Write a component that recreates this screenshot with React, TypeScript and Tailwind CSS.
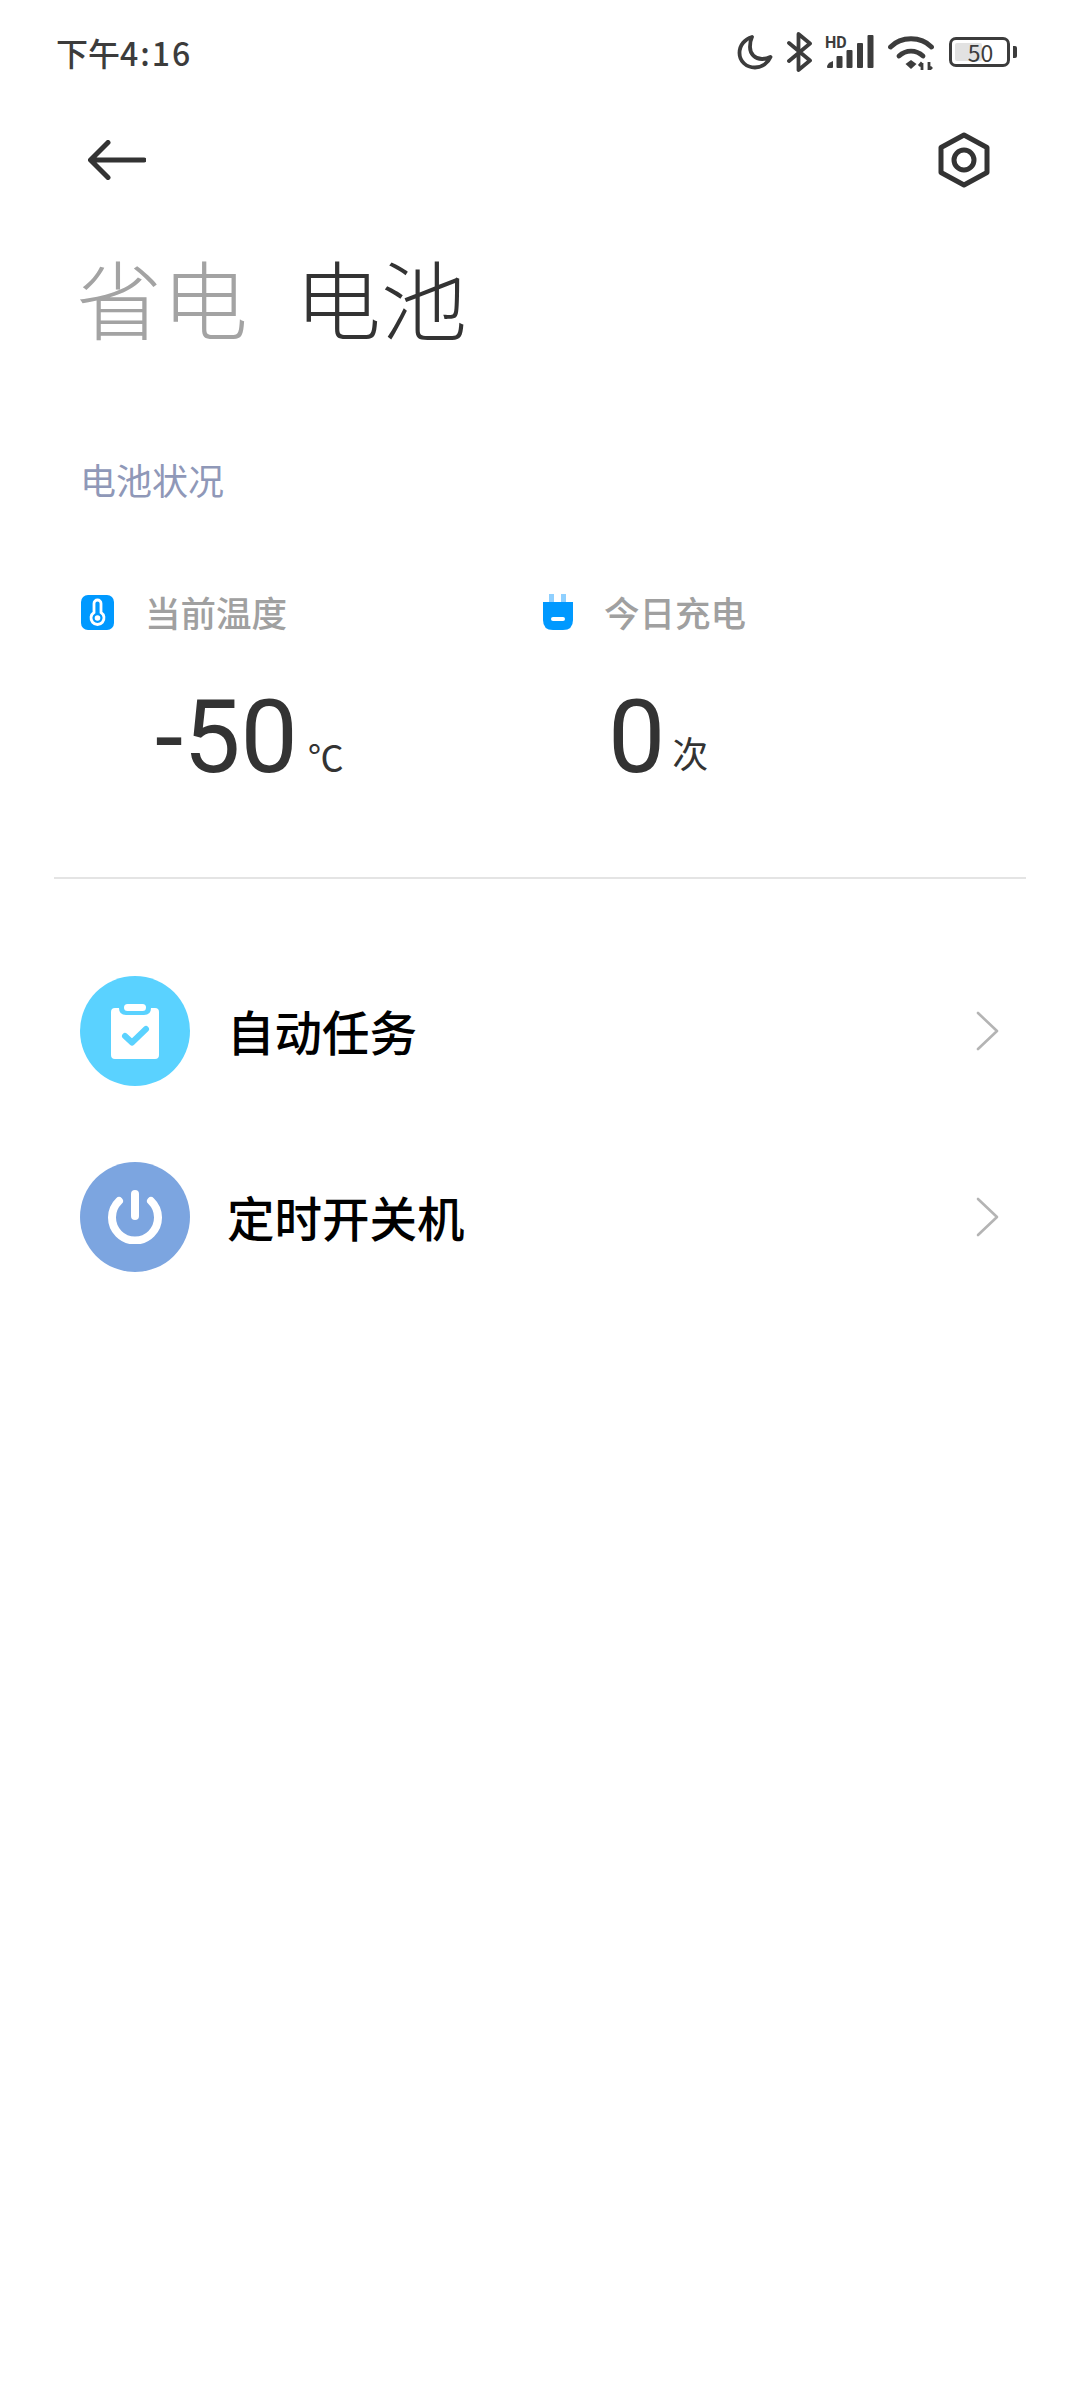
const cjk = "font-['Noto_Sans_CJK_SC','Noto_Sans',sans-serif]";
const num = "font-['Roboto','Noto_Sans_CJK_SC',sans-serif]";

const StatusIcons = () => (
  <div className="flex items-center">
    {/* moon */}
    <svg width="36" height="36" viewBox="0 0 36 36" fill="none" stroke="#3c3c3c" strokeWidth="3.800" strokeLinejoin="round" strokeLinecap="round">
      <path d="M15 3 C8 5 2.500 11 2.500 19 C2.500 27 9 33.500 18 33.500 C25 33.500 31 29 33.500 23 C31 24.500 28 25 25 25 C18 25 13 20 13 13 C13 9 13.500 6 15 3 Z" />
    </svg>
    {/* bluetooth */}
    <svg className="ml-[14px]" width="26" height="40" viewBox="0 0 26 40" fill="none" stroke="#3c3c3c" strokeWidth="3.800" strokeLinejoin="round" strokeLinecap="round">
      <path d="M2 11 L23 28.500 L11.500 38 L11.500 2 L23 11.500 L2 29" />
    </svg>
    {/* HD signal */}
    <svg className="ml-[12px] overflow-visible" width="50" height="36" viewBox="0 0 50 36">
      <text x="0" y="13.500" fontFamily="Roboto, sans-serif" fontWeight="700" fontSize="16" fill="#3c3c3c">HD</text>
      <path d="M2 33 Q2 29 8 27 L8 33 Q8 34 7 34 L3 34 Q2 34 2 33Z" fill="#3c3c3c" />
      <rect x="11.500" y="22" width="6" height="12" rx="1" fill="#3c3c3c" />
      <rect x="21.500" y="16" width="6" height="18" rx="1" fill="#3c3c3c" />
      <rect x="32" y="9" width="6" height="25" rx="1" fill="#3c3c3c" />
      <rect x="42.500" y="1" width="6" height="33" rx="1" fill="#3c3c3c" />
    </svg>
    {/* wifi */}
    <svg className="ml-[13px]" width="46" height="36" viewBox="0 0 46 36" fill="none">
      <path d="M2.500 13 C13 2 33 2 43.500 13" stroke="#3c3c3c" strokeWidth="4.800" strokeLinecap="round" />
      <path d="M11 22 C18 15.500 28 15.500 35 22" stroke="#3c3c3c" strokeWidth="4.800" strokeLinecap="round" />
      <path d="M17.500 30 L23 26 L28.500 30 L23 35 Z" fill="#3c3c3c" />
      <path d="M34 36 V29 M31 32 L34 28.500 M41 36 V28 M41 36 L44 33" stroke="#3c3c3c" strokeWidth="2.800" />
    </svg>
    {/* battery */}
    <div className="ml-[15px] flex items-center">
      <div className="relative w-[61px] h-[30px] rounded-[7px] border-[3px] border-[#3c3c3c]">
        <div className="absolute left-[3px] top-[3px] bottom-[3px] w-[27px] rounded-[2px] bg-[#e2e2e2]" />
        <span className={`absolute inset-0 pl-[2px] flex items-center justify-center text-[23px] leading-none text-[#3c3c3c] ${cjk}`}>50</span>
      </div>
      <div className="ml-[3px] w-[4px] h-[12px] rounded-r-[2px] bg-[#3c3c3c]" />
    </div>
  </div>
);

const StatBlock = ({
  icon,
  label,
  value,
  unit,
  valueClass,
  unitClass,
}: {
  icon: React.ReactNode;
  label: string;
  value: string;
  unit: string;
  valueClass: string;
  unitClass: string;
}) => (
  <div className="flex-1">
    <div className="flex items-center h-[36px] gap-[31px]">
      {icon}
      <span className={`text-[35.500px] leading-none font-medium text-[#a0a0a0] ${cjk}`}>{label}</span>
    </div>
    <div className={`mt-[62px] flex items-baseline ${valueClass}`}>
      <span className={`text-[102px] leading-[90px] text-[#333333] ${num}`}>{value}</span>
      <span className={`text-[36px] leading-none text-[#333333] ${cjk} ${unitClass}`}>{unit}</span>
    </div>
  </div>
);

const Row = ({ bg, icon, label }: { bg: string; icon: React.ReactNode; label: string }) => (
  <div className="flex items-center h-[110px] pl-[80px] pr-[80px]">
    <div className={`flex items-center justify-center w-[110px] h-[110px] rounded-full ${bg}`}>{icon}</div>
    <span className={`ml-[37px] flex-1 text-[47.500px] leading-none font-medium text-black ${cjk}`}>{label}</span>
    <svg width="24" height="40" viewBox="0 0 24 40" fill="none" stroke="#b4b4b4" strokeWidth="2.600" strokeLinecap="round" strokeLinejoin="round">
      <path d="M2 2 L21 20 L2 38" />
    </svg>
  </div>
);

export default function App() {
  return (
    <div className={`w-[1080px] min-h-[2400px] bg-white ${cjk}`}>
      {/* status bar */}
      <div className="flex items-center justify-between h-[104px] pl-[56px] pr-[63px]">
        <span className="text-[32px] leading-none font-medium text-[#3c3c3c]">
          下午<span className="tracking-[2px]">4:16</span>
        </span>
        <StatusIcons />
      </div>

      {/* top actions */}
      <div className="flex items-center justify-between h-[112px] pl-[88px] pr-[90px]">
        <svg width="58" height="40" viewBox="0 0 58 40" fill="none" stroke="#333333" strokeWidth="5" strokeLinecap="round" strokeLinejoin="round">
          <path d="M56 20 L3 20 M20 2.500 L2.500 20 L20 37.500" />
        </svg>
        <svg width="52" height="56" viewBox="0 0 52 56" fill="none" stroke="#333333" strokeWidth="5" strokeLinejoin="round">
          <path d="M26 3 L49 15.500 L49 40.500 L26 53 L3 40.500 L3 15.500 Z" />
          <circle cx="26" cy="28" r="10" />
        </svg>
      </div>

      {/* tabs */}
      <div className="flex items-center mt-[36px] pl-[76px] gap-[47px] h-[90px]">
        <span className="text-[86px] leading-none font-light text-[#a3a3a3]">省电</span>
        <span className="text-[86px] leading-none font-light text-[#333333]">电池</span>
      </div>

      <div className="mt-[117px] pl-[80px] text-[36px] leading-[40px] text-[#8f98b8]">电池状况</div>

      {/* stats */}
      <div className="flex mt-[95px] pl-[81px]">
        <div className="w-[462px]">
          <StatBlock
            icon={
              <svg width="33" height="35" viewBox="0 0 33 35">
                <rect width="33" height="35" rx="7" fill="#0099ff" />
                <path d="M13 8.500 a3.500 3.500 0 0 1 7 0 V17.500 a6.500 6.500 0 1 1 -7 0 Z" fill="none" stroke="#ffffff" strokeWidth="2.800" />
                <circle cx="16.500" cy="23" r="2.800" fill="#ffffff" />
              </svg>
            }
            label="当前温度"
            value="-50"
            unit="℃"
            valueClass="pl-[74px]"
            unitClass="ml-[10px]"
          />
        </div>
        <div className="flex-1">
          <StatBlock
            icon={
              <svg width="30" height="36" viewBox="0 0 30 36">
                <rect x="6" y="0" width="5" height="10" fill="#8fd0ff" />
                <rect x="18" y="0" width="5" height="10" fill="#8fd0ff" />
                <path d="M0 8 H30 V26 Q30 36 20 36 H10 Q0 36 0 26 Z" fill="#0099ff" />
                <rect x="8" y="23" width="14" height="4" rx="2" fill="#ffffff" />
              </svg>
            }
            label="今日充电"
            value="0"
            unit="次"
            valueClass="pl-[65px]"
            unitClass="ml-[7px] -translate-y-[4px]"
          />
        </div>
      </div>

      <div className="mt-[95px] mx-[54px] h-[2px] bg-[#e4e4e4]" />

      {/* rows */}
      <div className="mt-[97px] flex flex-col gap-[76px]">
        <Row
          bg="bg-[#5ad2ff]"
          label="自动任务"
          icon={
            <svg width="48" height="55" viewBox="0 0 48 55">
              <path d="M4 4 H8 Q8 11 15 11 H33 Q40 11 40 4 H44 Q48 4 48 8 V51 Q48 55 44 55 H4 Q0 55 0 51 V8 Q0 4 4 4 Z" fill="#ffffff" />
              <rect x="13" y="0" width="22" height="7" rx="3.500" fill="#ffffff" />
              <path d="M14 32 L21 38.500 L35 25" fill="none" stroke="#5ad2ff" strokeWidth="6" strokeLinecap="round" strokeLinejoin="round" />
            </svg>
          }
        />
        <Row
          bg="bg-[#7ca5e0]"
          label="定时开关机"
          icon={
            <svg width="54" height="54" viewBox="0 0 54 54" fill="none" stroke="#ffffff" strokeWidth="8" strokeLinecap="round">
              <path d="M11 11 A 23 23 0 1 0 43 11" />
              <path d="M27 4 V26" />
            </svg>
          }
        />
      </div>
    </div>
  );
}
